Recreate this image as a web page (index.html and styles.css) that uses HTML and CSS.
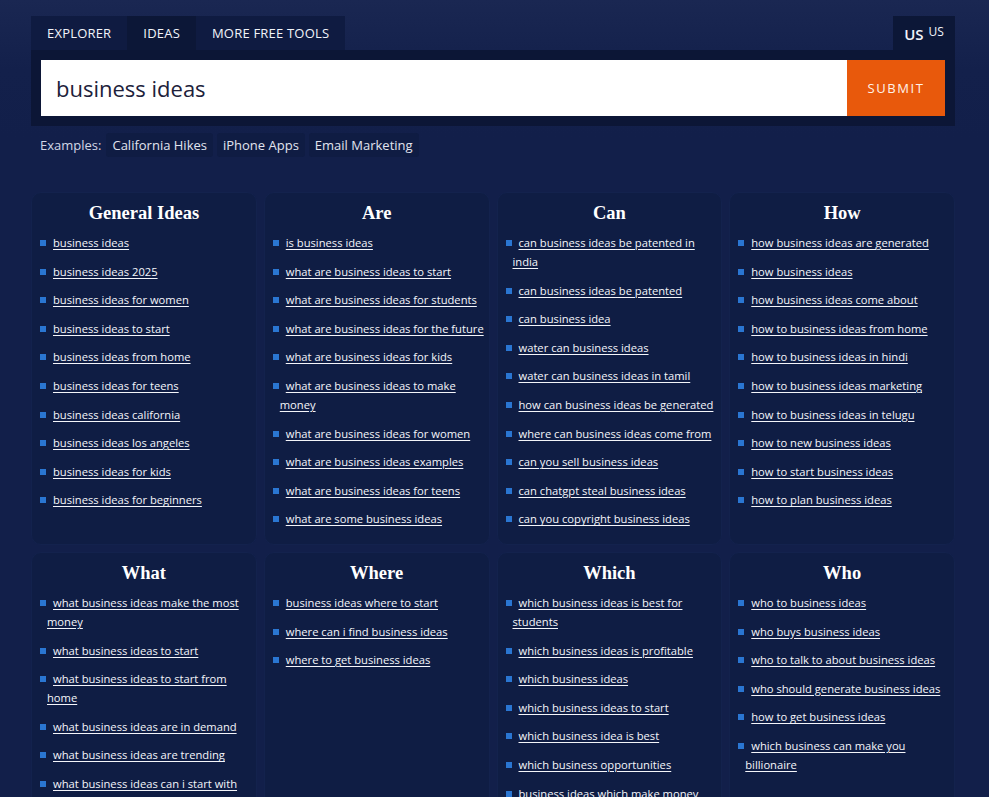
FILE: index.html
```html
<!DOCTYPE html>
<html lang="en">
<head>
    <meta charset="UTF-8">
    <meta name="viewport" content="width=device-width, initial-scale=1.0">
    <title>Business Ideas</title>
    <link rel="stylesheet" href="styles.css">
</head>
<body>
    <div class="page">
        <div class="top-bar">
            <nav class="tabs">
                <a class="tab" href="#">EXPLORER</a>
                <a class="tab active" href="#">IDEAS</a>
                <a class="tab" href="#">MORE FREE TOOLS</a>
            </nav>
            <div class="locale">US <sup>US</sup></div>
        </div>

        <form class="search-box">
            <input class="search-input" type="text" value="business ideas">
            <button class="submit-btn" type="button">SUBMIT</button>
        </form>

        <div class="examples">
            <span class="examples-label">Examples:</span>
            <a class="chip" href="#">California Hikes</a>
            <a class="chip" href="#">iPhone Apps</a>
            <a class="chip" href="#">Email Marketing</a>
        </div>

        <div class="idea-grid">
            <div class="idea-card">
                <h2>General Ideas</h2>
                <ul>
                    <li><a href="#">business ideas</a></li>
                    <li><a href="#">business ideas 2025</a></li>
                    <li><a href="#">business ideas for women</a></li>
                    <li><a href="#">business ideas to start</a></li>
                    <li><a href="#">business ideas from home</a></li>
                    <li><a href="#">business ideas for teens</a></li>
                    <li><a href="#">business ideas california</a></li>
                    <li><a href="#">business ideas los angeles</a></li>
                    <li><a href="#">business ideas for kids</a></li>
                    <li><a href="#">business ideas for beginners</a></li>
                </ul>
            </div>

            <div class="idea-card">
                <h2>Are</h2>
                <ul>
                    <li><a href="#">is business ideas</a></li>
                    <li><a href="#">what are business ideas to start</a></li>
                    <li><a href="#">what are business ideas for students</a></li>
                    <li><a href="#">what are business ideas for the future</a></li>
                    <li><a href="#">what are business ideas for kids</a></li>
                    <li><a href="#">what are business ideas to make money</a></li>
                    <li><a href="#">what are business ideas for women</a></li>
                    <li><a href="#">what are business ideas examples</a></li>
                    <li><a href="#">what are business ideas for teens</a></li>
                    <li><a href="#">what are some business ideas</a></li>
                </ul>
            </div>

            <div class="idea-card">
                <h2>Can</h2>
                <ul>
                    <li><a href="#">can business ideas be patented in india</a></li>
                    <li><a href="#">can business ideas be patented</a></li>
                    <li><a href="#">can business idea</a></li>
                    <li><a href="#">water can business ideas</a></li>
                    <li><a href="#">water can business ideas in tamil</a></li>
                    <li><a href="#">how can business ideas be generated</a></li>
                    <li><a href="#">where can business ideas come from</a></li>
                    <li><a href="#">can you sell business ideas</a></li>
                    <li><a href="#">can chatgpt steal business ideas</a></li>
                    <li><a href="#">can you copyright business ideas</a></li>
                </ul>
            </div>

            <div class="idea-card">
                <h2>How</h2>
                <ul>
                    <li><a href="#">how business ideas are generated</a></li>
                    <li><a href="#">how business ideas</a></li>
                    <li><a href="#">how business ideas come about</a></li>
                    <li><a href="#">how to business ideas from home</a></li>
                    <li><a href="#">how to business ideas in hindi</a></li>
                    <li><a href="#">how to business ideas marketing</a></li>
                    <li><a href="#">how to business ideas in telugu</a></li>
                    <li><a href="#">how to new business ideas</a></li>
                    <li><a href="#">how to start business ideas</a></li>
                    <li><a href="#">how to plan business ideas</a></li>
                </ul>
            </div>

            <div class="idea-card">
                <h2>What</h2>
                <ul>
                    <li><a href="#">what business ideas make the most money</a></li>
                    <li><a href="#">what business ideas to start</a></li>
                    <li><a href="#">what business ideas to start from home</a></li>
                    <li><a href="#">what business ideas are in demand</a></li>
                    <li><a href="#">what business ideas are trending</a></li>
                    <li><a href="#">what business ideas can i start with</a></li>
                    <li><a href="#">what business ideas are profitable</a></li>
                    <li><a href="#">what business ideas are good</a></li>
                </ul>
            </div>

            <div class="idea-card">
                <h2>Where</h2>
                <ul>
                    <li><a href="#">business ideas where to start</a></li>
                    <li><a href="#">where can i find business ideas</a></li>
                    <li><a href="#">where to get business ideas</a></li>
                </ul>
            </div>

            <div class="idea-card">
                <h2>Which</h2>
                <ul>
                    <li><a href="#">which business ideas is best for students</a></li>
                    <li><a href="#">which business ideas is profitable</a></li>
                    <li><a href="#">which business ideas</a></li>
                    <li><a href="#">which business ideas to start</a></li>
                    <li><a href="#">which business idea is best</a></li>
                    <li><a href="#">which business opportunities</a></li>
                    <li><a href="#">business ideas which make money</a></li>
                    <li><a href="#">which business is best for beginners</a></li>
                </ul>
            </div>

            <div class="idea-card">
                <h2>Who</h2>
                <ul>
                    <li><a href="#">who to business ideas</a></li>
                    <li><a href="#">who buys business ideas</a></li>
                    <li><a href="#">who to talk to about business ideas</a></li>
                    <li><a href="#">who should generate business ideas</a></li>
                    <li><a href="#">how to get business ideas</a></li>
                    <li><a href="#">which business can make you billionaire</a></li>
                </ul>
            </div>
        </div>
    </div>
</body>
</html>
```

FILE: styles.css
```css
* {
    margin: 0;
    padding: 0;
    box-sizing: border-box;
}

body {
    font-family: "Open Sans", "Noto Sans", sans-serif;
    background: #121f4a;
    background-image: linear-gradient(to bottom, #1a2752 0px, #13204b 70px, #121f4a 140px);
    background-repeat: no-repeat;
    color: #ffffff;
    min-height: 100vh;
}

a {
    color: inherit;
    text-decoration: none;
}

.page {
    width: 924px;
    margin-left: 31px;
    padding-top: 16px;
    padding-bottom: 40px;
}

/* top tabs */
.top-bar {
    display: flex;
    justify-content: space-between;
    align-items: flex-end;
}

.tabs {
    display: flex;
    background: #0f1b41;
}

.tab {
    display: block;
    height: 34px;
    line-height: 34px;
    padding: 0 16px;
    font-size: 13px;
    letter-spacing: 0.2px;
    color: #f2f4fa;
}

.tab.active {
    background: #0c1737;
}

.locale {
    height: 34px;
    width: 62px;
    background: #0c1737;
    display: flex;
    align-items: center;
    justify-content: center;
    font-size: 15px;
    font-weight: 600;
    color: #f2f4fa;
    padding-top: 2px;
}

.locale sup {
    font-size: 12px;
    font-weight: 400;
    margin-left: 5px;
    position: relative;
    top: -2px;
    vertical-align: top;
    line-height: 12px;
}

/* search */
.search-box {
    display: flex;
    background: #0c1636;
    padding: 10px;
}

.search-input {
    flex: 1;
    height: 56px;
    border: none;
    outline: none;
    padding: 0 15px;
    font-family: "Open Sans", "Noto Sans", sans-serif;
    font-size: 22px;
    color: #20213a;
    background: #ffffff;
}

.submit-btn {
    width: 98px;
    height: 56px;
    border: none;
    background: #e8590c;
    color: #fff3ea;
    font-family: "Open Sans", "Noto Sans", sans-serif;
    font-size: 13px;
    letter-spacing: 1.6px;
    cursor: pointer;
}

/* examples */
.examples {
    display: flex;
    align-items: center;
    gap: 4px;
    margin-top: 7px;
    padding-left: 9px;
    font-size: 13px;
    color: #d3d7e6;
}

.examples-label {
    margin-right: 1px;
}

.chip {
    background: #0f1c43;
    border-radius: 3px;
    padding: 3px 6px;
    color: #e1e4ef;
}

/* idea cards */
.idea-grid {
    display: grid;
    grid-template-columns: repeat(4, 1fr);
    gap: 7px;
    margin-top: 35px;
}

.idea-card {
    background: #0f1d44;
    border: 1px solid #13224d;
    border-radius: 10px;
    padding: 8px 2px 6px 8px;
}

.idea-card h2 {
    font-family: "Liberation Serif", "DejaVu Serif", serif;
    font-size: 18.5px;
    font-weight: 700;
    text-align: center;
    line-height: 24px;
    margin-bottom: 8px;
    padding-right: 6px;
    color: #ffffff;
}

.idea-card ul {
    list-style: none;
}

.idea-card li {
    font-size: 11.2px;
    line-height: 19px;
    margin-bottom: 9.6px;
    padding-left: 7px;
    text-indent: -7px;
}

.idea-card li::before {
    content: '';
    display: inline-block;
    width: 6px;
    height: 6px;
    background: #2a76d2;
    margin-right: 7px;
    vertical-align: 1px;
}

.idea-card li a {
    color: #f4f5fa;
    text-decoration: underline;
    text-underline-offset: 2px;
}
```
